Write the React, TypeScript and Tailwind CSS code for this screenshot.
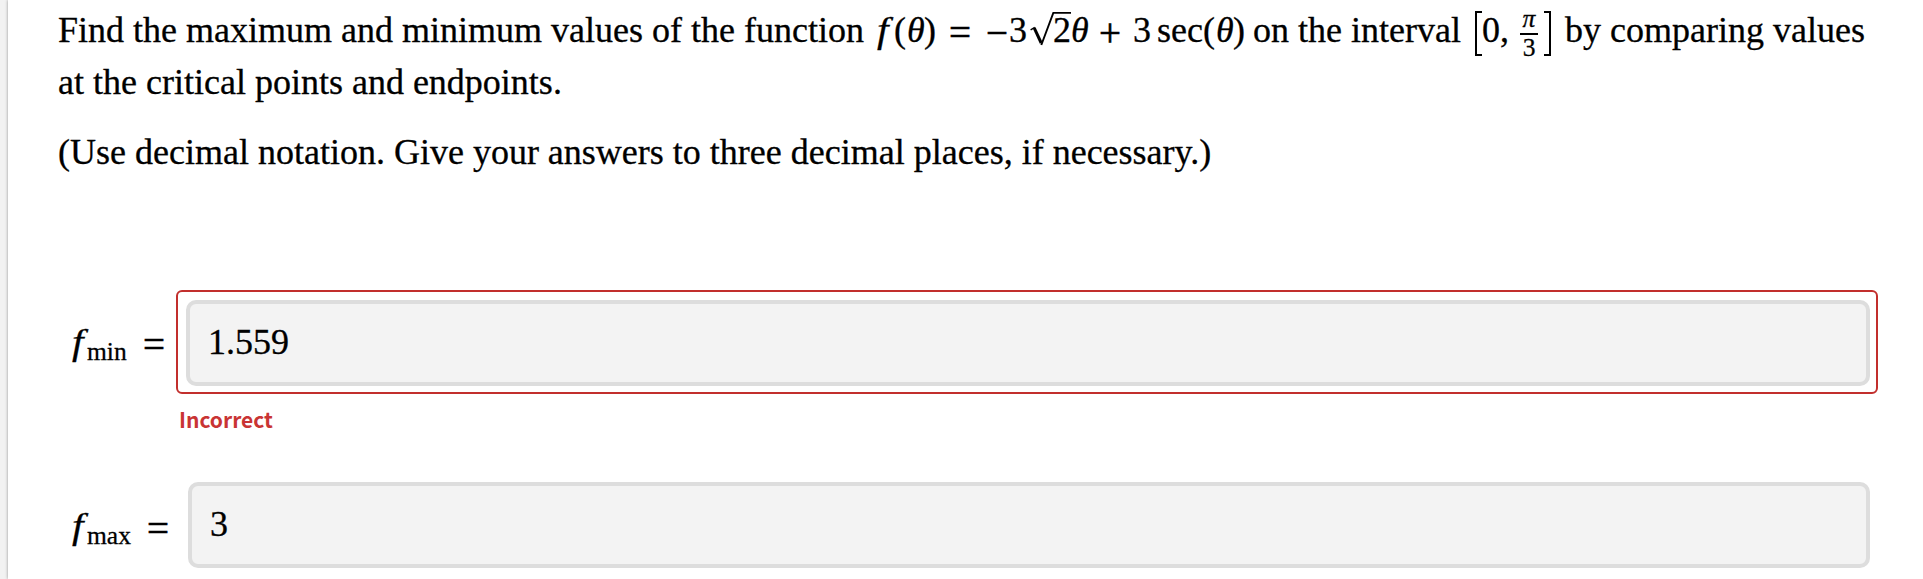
import { ReactNode } from "react";

type MathProps = { className?: string; children: ReactNode };

const Slot = ({ className = "", children }: MathProps) => (
  <span className={`inline-block shrink-0 whitespace-pre ${className}`}>{children}</span>
);

// relation and binary operators sit slightly larger than the digits
const Operator = ({ className = "", children }: MathProps) => (
  <span
    className={`inline-block shrink-0 translate-y-[4px] text-[39px] leading-[36px] [-webkit-text-stroke:0.6px_black] ${className}`}
  >
    {children}
  </span>
);

const Sqrt = ({ children }: { children: ReactNode }) => (
  <span className="relative inline-block w-[43px] shrink-0 pl-[25px]">
    <svg
      className="absolute left-[2px] top-[7px]"
      width="42"
      height="36"
      viewBox="0 0 42 36"
      fill="none"
      stroke="black"
    >
      <path d="M0.6 18.8L4.8 16.4" strokeWidth="1.4" />
      <path d="M4.2 16.8L11.2 32" strokeWidth="3" />
      <path d="M11.3 34L23.3 1.9H41" strokeWidth="1.9" />
    </svg>
    {children}
  </span>
);

const Bracket = ({ right }: { right?: boolean }) => (
  <span
    className={`h-[45px] w-[7px] shrink-0 self-start border-y-2 border-black mt-[7px] ${
      right ? "border-r-2" : "border-l-2"
    }`}
  />
);

const Fraction = () => (
  <span className="ml-[10px] mr-[6px] flex h-[52px] w-[18px] shrink-0 flex-col items-center self-start pt-[4px] text-[25.5px] leading-[22px]">
    <span className="mb-[3px] italic">π</span>
    <span className="h-[2px] w-full shrink-0 bg-black" />
    <span className="mt-[2px]">3</span>
  </span>
);

type AnswerProps = {
  subscript: string;
  value: string;
  labelClass: string;
  incorrect?: boolean;
};

const Answer = ({ subscript, value, labelClass, incorrect }: AnswerProps) => (
  <div className="flex">
    <div className={`flex shrink-0 items-baseline pl-[14px] leading-[52px] ${labelClass}`}>
      <span className="w-[15px] origin-left scale-x-[1.15] italic">f</span>
      <span className="translate-y-[6px] text-[25.5px]">{subscript}</span>
      <Operator className="ml-auto">=</Operator>
    </div>
    <div
      className={`flex-1 ${
        incorrect
          ? "mr-[45px] rounded-[6px] border-2 border-[#c22f2d] pb-[6px] pl-2 pr-[6px] pt-2"
          : "mr-[53px]"
      }`}
    >
      <input
        readOnly
        value={value}
        className="block h-[86px] w-full rounded-[10px] border-4 border-[#dddddd] bg-[#f3f3f3] pb-[2px] pl-[18px] pr-[18px] text-black outline-none"
      />
    </div>
  </div>
);

const App = () => {
  return (
    <main className="flex h-[579px] w-full overflow-hidden bg-[#f2f2f2] font-['Liberation_Serif',serif] text-[36px] text-black [-webkit-text-stroke:0.3px_black]">
      <section className="ml-2 flex-1 bg-white pl-[50px] shadow-[0_0_3px_rgba(0,0,0,0.4)]">
        <div className="pt-[4px] leading-[52px]">
          <div className="flex h-[52px] items-baseline">
            <Slot className="w-[819px]">
              Find the maximum and minimum values of the function
            </Slot>
            <Slot className="w-[17px] origin-left scale-x-[1.15] italic">f</Slot>
            <Slot className="w-[13px]">(</Slot>
            <Slot className="w-[17px] italic">θ</Slot>
            <Slot className="w-[25px]">)</Slot>
            <Operator className="w-[37px]">=</Operator>
            <Operator className="w-[23px]">−</Operator>
            <Slot className="w-[19px]">3</Slot>
            <Sqrt>2</Sqrt>
            <Slot className="w-[28px] italic">θ</Slot>
            <Operator className="w-[34px]">+</Operator>
            <Slot className="w-[24px]">3</Slot>
            <Slot className="w-[46px]">sec</Slot>
            <Slot className="w-[13px]">(</Slot>
            <Slot className="w-[17px] italic">θ</Slot>
            <Slot className="w-[20px]">)</Slot>
            <Slot className="w-[222px]">on the interval</Slot>
            <Bracket />
            <Slot className="w-[28px]">0,</Slot>
            <Fraction />
            <Bracket right />
            <Slot className="ml-[14px]">by comparing values</Slot>
          </div>
          <p>at the critical points and endpoints.</p>
          <p className="mt-[18px]">
            (Use decimal notation. Give your answers to three decimal places, if necessary.)
          </p>
        </div>

        <div className="mt-[112px]">
          <Answer
            subscript="min"
            value="1.559"
            labelClass="mt-[26px] w-[118px] pr-[11px]"
            incorrect
          />
          <p className="ml-[121px] mt-[7px] h-[81px] font-['Noto_Sans_CJK_SC',sans-serif] text-[21px] font-bold leading-[36px] text-[#c93434] [-webkit-text-stroke:0]">
            Incorrect
          </p>
          <Answer subscript="max" value="3" labelClass="mt-[18px] w-[130px] pr-[19px]" />
        </div>
      </section>
    </main>
  );
};

export default App;
